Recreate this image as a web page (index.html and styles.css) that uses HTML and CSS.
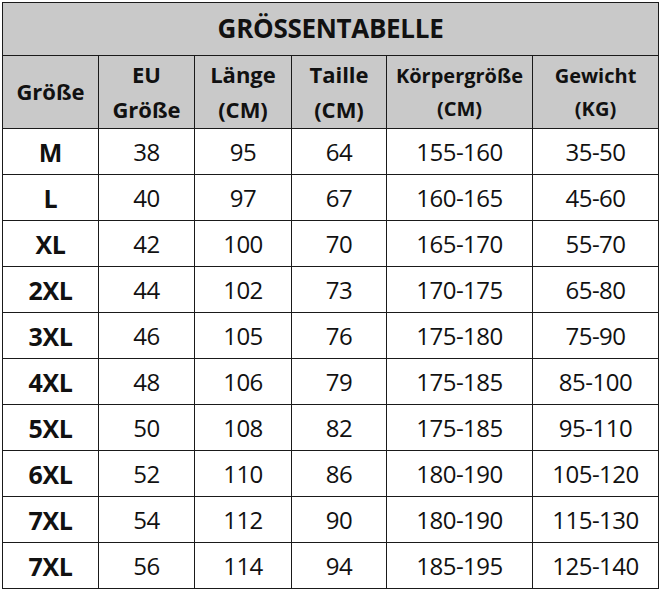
FILE: index.html
```html
<!DOCTYPE html>
<html lang="de">
<head>
<meta charset="utf-8">
<title>Größentabelle</title>
<link rel="stylesheet" href="styles.css">
</head>
<body>
<table class="size-table">
  <colgroup>
    <col class="c1"><col class="c2"><col class="c3"><col class="c4"><col class="c5"><col class="c6">
  </colgroup>
  <thead>
    <tr class="title-row"><th colspan="6">GRÖSSENTABELLE</th></tr>
    <tr class="head-row">
      <th class="big">Größe</th>
      <th class="big">EU<br>Größe</th>
      <th class="big">Länge<br>(CM)</th>
      <th class="big">Taille<br>(CM)</th>
      <th class="small">Körpergröße<br>(CM)</th>
      <th class="small">Gewicht<br>(KG)</th>
    </tr>
  </thead>
  <tbody>
    <tr><th>M</th><td>38</td><td>95</td><td>64</td><td>155-160</td><td>35-50</td></tr>
    <tr><th>L</th><td>40</td><td>97</td><td>67</td><td>160-165</td><td>45-60</td></tr>
    <tr><th>XL</th><td>42</td><td>100</td><td>70</td><td>165-170</td><td>55-70</td></tr>
    <tr><th>2XL</th><td>44</td><td>102</td><td>73</td><td>170-175</td><td>65-80</td></tr>
    <tr><th>3XL</th><td>46</td><td>105</td><td>76</td><td>175-180</td><td>75-90</td></tr>
    <tr><th>4XL</th><td>48</td><td>106</td><td>79</td><td>175-185</td><td>85-100</td></tr>
    <tr><th>5XL</th><td>50</td><td>108</td><td>82</td><td>175-185</td><td>95-110</td></tr>
    <tr><th>6XL</th><td>52</td><td>110</td><td>86</td><td>180-190</td><td>105-120</td></tr>
    <tr><th>7XL</th><td>54</td><td>112</td><td>90</td><td>180-190</td><td>115-130</td></tr>
    <tr><th>7XL</th><td>56</td><td>114</td><td>94</td><td>185-195</td><td>125-140</td></tr>
  </tbody>
</table>
</body>
</html>
```

FILE: styles.css
```css
html, body {
  margin: 0;
  padding: 0;
  background: #ffffff;
}
body {
  padding: 2px 0 0 2px;
  font-family: "Open Sans", "Noto Sans", sans-serif;
  color: #111111;
}
.size-table {
  border-collapse: collapse;
  table-layout: fixed;
  width: 656px;
}
.c1 { width: 96px; }
.c2 { width: 96px; }
.c3 { width: 97px; }
.c4 { width: 95px; }
.c5 { width: 146px; }
.c6 { width: 126px; }
.size-table th,
.size-table td {
  border: 1px solid #1a1a1a;
  padding: 0;
  text-align: center;
  vertical-align: middle;
}
.title-row th {
  height: 49px;
  padding-bottom: 3px;
  background: #c9c9c9;
  font-size: 26px;
  font-weight: 700;
  letter-spacing: -0.3px;
}
.head-row th {
  height: 71px;
  padding-bottom: 1px;
  background: #c9c9c9;
  font-weight: 700;
}
.head-row .big {
  font-size: 22px;
  line-height: 35px;
}
.head-row .small {
  font-size: 20px;
  line-height: 33px;
}
tbody tr {
  height: 46px;
}
tbody th {
  font-size: 25px;
  font-weight: 700;
  letter-spacing: -0.3px;
}
tbody td {
  font-size: 24px;
  font-weight: 400;
  letter-spacing: -0.5px;
}
```
